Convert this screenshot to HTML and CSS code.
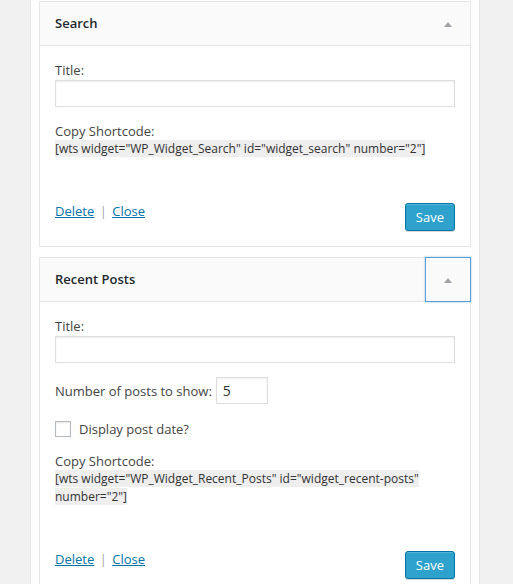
FILE: index.html
```html
<!DOCTYPE html>
<html>
<head>
<meta charset="utf-8">
<link rel="stylesheet" href="styles.css">
</head>
<body>
<div class="sidebar">
  <div class="widget">
    <div class="widget-top">
      <h4 class="widget-title">Search</h4>
      <button class="widget-action" aria-label="Toggle"><svg width="8" height="5" viewBox="0 0 8 5"><polygon points="4,0 8,5 0,5" fill="#a0a5aa"/></svg></button>
    </div>
    <div class="widget-inside">
      <div class="field">
        <label class="lbl">Title:</label>
        <input class="text-input" type="text">
      </div>
      <div class="field">
        <div class="lbl">Copy Shortcode:</div>
        <div class="code-wrap"><span class="code">[wts widget="WP_Widget_Search" id="widget_search" number="2"]</span></div>
      </div>
      <div class="actions">
        <div class="links"><a href="#">Delete</a> <span class="sep">|</span> <a href="#">Close</a></div>
        <button class="button-primary">Save</button>
      </div>
    </div>
  </div>

  <div class="widget">
    <div class="widget-top">
      <h4 class="widget-title">Recent Posts</h4>
      <button class="widget-action focused" aria-label="Toggle"><svg width="8" height="5" viewBox="0 0 8 5"><polygon points="4,0 8,5 0,5" fill="#a0a5aa"/></svg></button>
    </div>
    <div class="widget-inside">
      <div class="field">
        <label class="lbl">Title:</label>
        <input class="text-input" type="text">
      </div>
      <div class="field number-row">
        <label class="lbl-inline">Number of posts to show:</label>
        <input class="small-input" type="text" value="5">
      </div>
      <div class="field check-row">
        <span class="checkbox"></span>
        <label class="lbl-inline">Display post date?</label>
      </div>
      <div class="field">
        <div class="lbl">Copy Shortcode:</div>
        <div class="code-wrap"><span class="code">[wts widget="WP_Widget_Recent_Posts" id="widget_recent-posts" number="2"]</span></div>
      </div>
      <div class="actions">
        <div class="links"><a href="#">Delete</a> <span class="sep">|</span> <a href="#">Close</a></div>
        <button class="button-primary">Save</button>
      </div>
    </div>
  </div>
</div>
</body>
</html>
```

FILE: styles.css
```css
html, body {
  margin: 0;
  padding: 0;
}
body {
  background: #f1f1f1;
  font-family: "Open Sans", "Liberation Sans", sans-serif;
  font-size: 13px;
  color: #444;
  height: 584px;
  overflow: hidden;
}
.sidebar {
  margin-left: 30px;
  width: 432px;
  min-height: 584px;
  background: #fff;
  border-left: 1px solid #e5e5e5;
  border-right: 1px solid #e5e5e5;
  padding: 1px 8px 0;
}
.widget {
  border: 1px solid #e5e5e5;
  background: #fff;
  margin-bottom: 10px;
}
.widget-top {
  display: flex;
  height: 43px;
  background: #fafafa;
  border-bottom: 1px solid #e5e5e5;
}
.widget-title {
  flex: 1;
  margin: 0;
  padding: 0 15px;
  font-size: 13px;
  font-weight: 600;
  color: #23282d;
  line-height: 43px;
}
.widget-action {
  width: 44px;
  height: 43px;
  border: 0;
  margin: 0;
  padding: 0;
  background: none;
  display: flex;
  align-items: center;
  justify-content: center;
}
.widget-action svg {
  display: block;
  margin-top: 1px;
}
.widget-action.focused {
  box-shadow: 0 0 0 1px #5b9dd9, 0 0 2px 1px rgba(30, 140, 190, 0.5);
}
.widget-inside {
  padding: 0 15px 15px;
}
.field {
  margin-top: 15px;
}
.lbl {
  display: block;
  line-height: 18px;
}
.text-input {
  display: block;
  box-sizing: border-box;
  width: 100%;
  height: 27px;
  margin: 1px 0 0;
  border: 1px solid #ddd;
  box-shadow: inset 0 1px 2px rgba(0, 0, 0, 0.07);
  background: #fff;
  font: inherit;
  padding: 3px 5px;
}
.number-row {
  margin-top: 14px;
  display: flex;
  align-items: baseline;
  gap: 4px;
  height: 27px;
}
.small-input {
  box-sizing: border-box;
  width: 52px;
  height: 27px;
  border: 1px solid #ddd;
  box-shadow: inset 0 1px 2px rgba(0, 0, 0, 0.07);
  font-family: inherit;
  font-size: 14px;
  color: #333;
  padding: 0 6px;
  margin: 0;
}
.check-row {
  margin-top: 17px;
  display: flex;
  align-items: center;
  gap: 8px;
  height: 16px;
}
.checkbox {
  box-sizing: border-box;
  width: 16px;
  height: 16px;
  border: 1px solid #b4b9be;
  box-shadow: inset 0 1px 2px rgba(0, 0, 0, 0.1);
  background: #fff;
  flex: none;
}
.lbl-inline {
  line-height: 18px;
}
.check-row + .field {
  margin-top: 15px;
}
.code-wrap {
  line-height: 18px;
  font-size: 12px;
}
.code {
  background: #eeeeee;
  color: #333;
}
.actions {
  margin-top: 44px;
  display: flex;
  justify-content: space-between;
  align-items: flex-start;
}
.links {
  line-height: 18px;
}
.links a {
  color: #0073aa;
  text-decoration: underline;
}
.sep {
  color: #a0a5aa;
  padding: 0 2px;
}
.button-primary {
  box-sizing: border-box;
  height: 28px;
  margin-top: 1px;
  padding: 0 10px 1px;
  border: 1px solid #0074a2;
  border-radius: 3px;
  background: #2ea2cc;
  box-shadow: inset 0 1px 0 rgba(120, 200, 230, 0.5), 0 1px 0 rgba(0, 0, 0, 0.15);
  color: #fff;
  font-family: inherit;
  font-size: 13px;
  line-height: 26px;
}
```
